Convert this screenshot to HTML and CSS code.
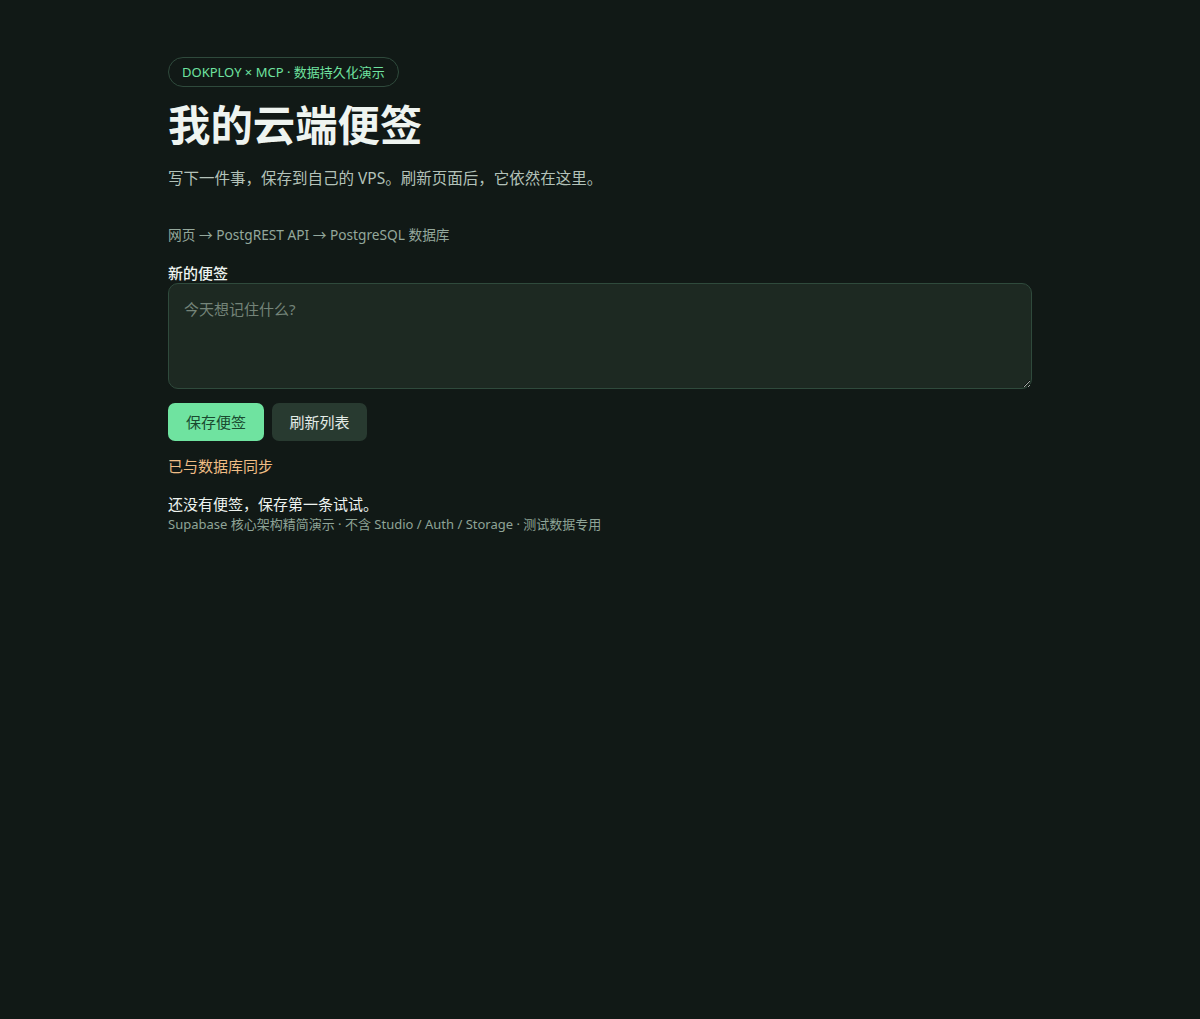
FILE: index.html
```html
<!DOCTYPE html>
<html lang="zh-CN">
<head>
<meta charset="utf-8">
<title>我的云端便签</title>
<link rel="stylesheet" href="styles.css">
</head>
<body>
<main class="page">
  <div class="pill">DOKPLOY × MCP · 数据持久化演示</div>
  <h1 class="title">我的云端便签</h1>
  <p class="lead">写下一件事，保存到自己的 VPS。刷新页面后，它依然在这里。</p>
  <p class="flow">网页 → PostgREST API → PostgreSQL 数据库</p>
  <label class="label" for="note">新的便签</label>
  <textarea id="note" class="input" placeholder="今天想记住什么?"></textarea>
  <div class="actions">
    <button class="btn btn-primary">保存便签</button>
    <button class="btn btn-secondary">刷新列表</button>
  </div>
  <p class="status">已与数据库同步</p>
  <p class="empty">还没有便签，保存第一条试试。</p>
  <p class="foot">Supabase 核心架构精简演示 · 不含 Studio / Auth / Storage · 测试数据专用</p>
</main>
</body>
</html>
```

FILE: styles.css
```css
* { box-sizing: border-box; }
html, body { margin: 0; padding: 0; }
body {
  background: #111916;
  color: #e6eee9;
  font-family: "Noto Sans", "Noto Sans CJK SC", sans-serif;
  min-height: 1019px;
}
.page {
  width: 864px;
  margin: 0 auto;
  padding-top: 57px;
  display: flex;
  flex-direction: column;
  align-items: flex-start;
}
.pill {
  height: 30px;
  padding: 0 13px;
  border: 1px solid #2f4a3c;
  border-radius: 15px;
  font-size: 13px;
  line-height: 28px;
  color: #6fe3a0;
}
.title {
  margin: 10px 0 0;
  font-size: 42.4px;
  line-height: 56px;
  font-weight: 700;
  color: #eef4f0;
  letter-spacing: 0;
}
.lead {
  margin: 14px 0 0;
  font-size: 15.5px;
  line-height: 22px;
  color: #b3c2b9;
}
.flow {
  margin: 36px 0 0;
  font-size: 13.7px;
  line-height: 20px;
  color: #94a89c;
}
.label {
  margin-top: 18px;
  font-size: 15px;
  line-height: 20px;
  font-weight: 500;
  color: #eef4f0;
}
.input {
  display: block;
  width: 864px;
  height: 106px;
  margin-top: 0;
  padding: 14px 15px;
  background: #1d2922;
  border: 1px solid #2f4a3c;
  border-radius: 10px;
  color: #e6eee9;
  font-family: inherit;
  font-size: 15px;
  line-height: 22px;
  resize: vertical;
  outline: none;
}
.input::placeholder { color: #748479; }
.actions {
  display: flex;
  gap: 8px;
  margin-top: 14px;
}
.btn {
  height: 38px;
  padding: 0 16px;
  border: none;
  border-radius: 7px;
  font-family: inherit;
  font-size: 15px;
  line-height: 38px;
  cursor: pointer;
}
.btn-primary { background: #6fe3a0; color: #1a4a2f; width: 96px; }
.btn-secondary { background: #283a30; color: #e3ebe6; width: 95px; }
.status {
  margin: 14px 0 0;
  font-size: 15px;
  line-height: 22px;
  color: #efbd85;
}
.empty {
  margin: 16px 0 0;
  font-size: 15px;
  line-height: 22px;
  color: #eef4f0;
}
.foot {
  margin: 1px 0 0;
  font-size: 13px;
  line-height: 16px;
  color: #8fa497;
}
```
